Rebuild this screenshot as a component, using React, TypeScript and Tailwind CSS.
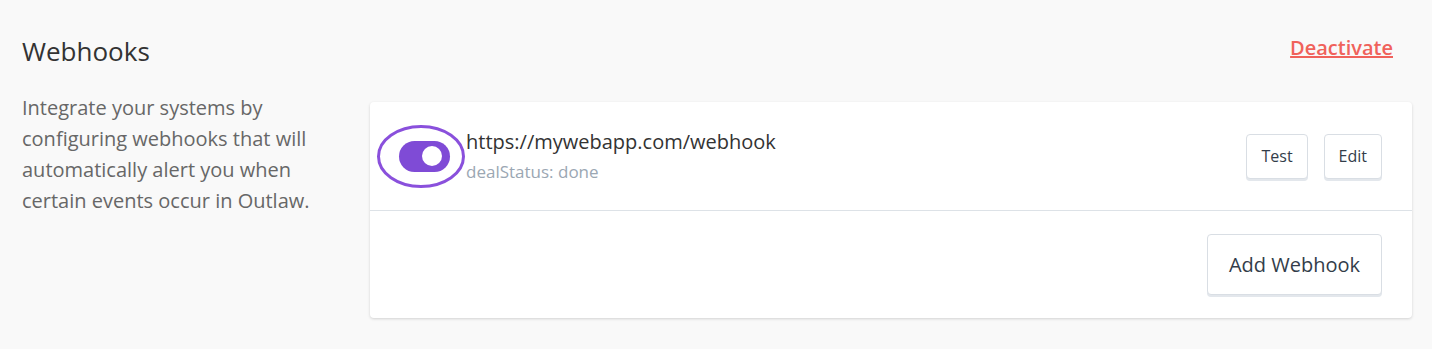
import React from 'react';

const font = { fontFamily: '"Open Sans", "Liberation Sans", sans-serif' };

const Toggle: React.FC = () => (
  <div className="relative shrink-0">
    <div className="w-[51px] h-[31px] rounded-full bg-[#7f4bd6] flex items-center justify-end pr-[8px]">
      <div className="w-[20px] h-[20px] rounded-full bg-white" />
    </div>
    {/* highlight ring drawn over the switch */}
    <svg
      className="absolute left-[-23px] top-[-17px] pointer-events-none"
      width="90"
      height="65"
      viewBox="0 0 90 65"
    >
      <ellipse cx="45" cy="32.5" rx="42.5" ry="30" fill="none" stroke="#8a50dc" strokeWidth="3" />
    </svg>
  </div>
);

export default function App() {
  return (
    <div className="min-h-[349px] bg-[#f9f9f9] pt-[33px] pl-[22px] pr-[20px]" style={font}>
      <div className="flex items-start justify-between pr-[19px]">
        <h2 className="text-[26px] leading-[36px] text-[#333333]">Webhooks</h2>
        <a href="#" className="mt-[1px] text-[20px] leading-[28px] font-semibold text-[#f0625b] underline">
          Deactivate
        </a>
      </div>

      <div className="flex mt-[23px]">
        <div className="w-[348px] shrink-0">
          <p className="w-[300px] text-[20px] leading-[31px] text-[#676767]">
            Integrate your systems by configuring webhooks that will automatically alert you when certain events occur in Outlaw.
          </p>
        </div>

        <div className="flex-1 mt-[10px] bg-white rounded-[4px] shadow-[0_1px_3px_rgba(0,0,0,0.16)]">
          <div className="h-[109px] flex items-center pl-[29px] pr-[30px] border-b border-[#dde2e7]">
            <Toggle />
            <div className="ml-[16px] flex-1">
              <div className="text-[20px] leading-[24px] text-[#333333]">https://mywebapp.com/webhook</div>
              <div className="mt-[7px] text-[17px] leading-[22px] text-[#9ba7b3]">dealStatus: done</div>
            </div>
            <div className="flex gap-[16px]">
              <button className="h-[45px] px-[14px] rounded-[4px] border border-[#d9dee4] shadow-[0_2px_0_#e3e7ec] text-[16px] text-[#333d4a] bg-white">
                Test
              </button>
              <button className="h-[45px] px-[14px] rounded-[4px] border border-[#d9dee4] shadow-[0_2px_0_#e3e7ec] text-[16px] text-[#333d4a] bg-white">
                Edit
              </button>
            </div>
          </div>
          <div className="h-[107px] flex items-center justify-end pr-[30px]">
            <button className="h-[61px] px-[21px] rounded-[4px] border border-[#d9dee4] shadow-[0_2px_0_#e3e7ec] text-[20px] text-[#333d4a] bg-white">
              Add Webhook
            </button>
          </div>
        </div>
      </div>
    </div>
  );
}
